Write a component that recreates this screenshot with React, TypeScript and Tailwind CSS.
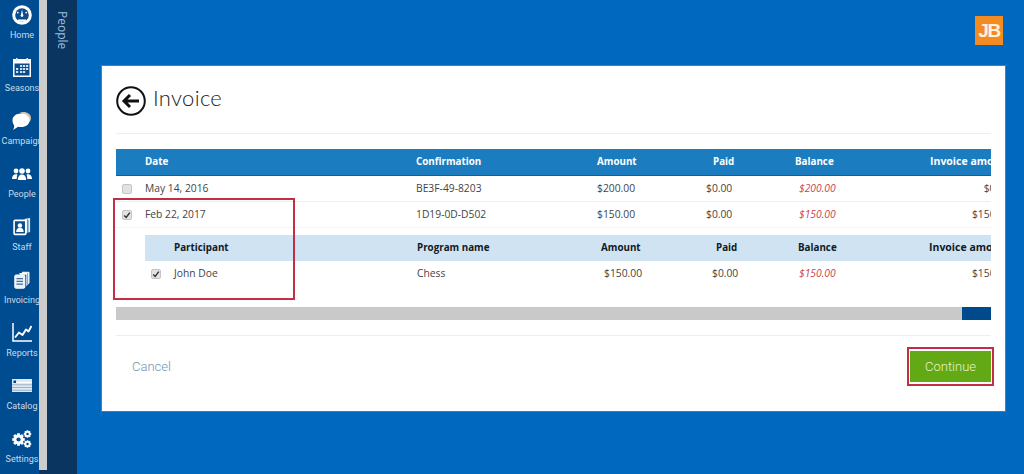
import type { ReactNode } from "react"

const font = "font-['Open_Sans','Noto_Sans',sans-serif]"

function HomeIcon() {
  return (
    <svg viewBox="0 0 20 20" className="w-[20px] h-[20px]">
      <circle cx="10" cy="10" r="9.800" fill="#fff" />
      <circle cx="10" cy="10" r="6.800" fill="#0b4d8c" />
      <path d="M9 9.500 10 4.500 11 9.500a1.400 1.400 0 1 1-2 0Z" fill="#fff" />
      <circle cx="5.800" cy="7.600" r="0.900" fill="#fff" />
      <circle cx="14.200" cy="7.600" r="0.900" fill="#fff" />
      <path d="M6 14.500h8v2.200H6z" fill="#fff" />
    </svg>
  )
}

function SeasonsIcon() {
  return (
    <svg viewBox="0 0 20 21" className="w-[20px] h-[21px]">
      <path d="M1 2h18v18H1z" fill="#fff" />
      <path d="M2.500 6.500h15v12h-15z" fill="#0b4d8c" />
      <path d="M4 1h1.600v3H4zM14.400 1H16v3h-1.600z" fill="#d8e6f2" />
      <path d="M8 8h2.200v2H8zM11 8h2.200v2H11zM14 8h2.200v2H14zM4 11h2.200v2H4zM8 11h2.200v2H8zM11 11h2.200v2H11zM14 11h2.200v2H14zM4 14h2.200v2H4zM8 14h2.200v2H8zM11 14h2.200v2H11z" fill="#cfdfee" />
    </svg>
  )
}

function CampaignIcon() {
  return (
    <svg viewBox="0 0 20 20" className="w-[20px] h-[20px]">
      <path d="M8 1.500c5.500-1.800 11 1 11 5.500 0 2.500-1.500 4.300-3 5-1-4-4-7-8-10.500Z" fill="#d5c7ad" />
      <path d="M9 2.500c5 0 8.500 2.800 8.500 6.800s-3.500 6.800-8.500 6.800c-1 0-2-.1-2.800-.4L1 19c.8-1.400 1.300-3 1.200-4.500C1 13.200.5 11.300.5 9.300.5 5.300 4 2.500 9 2.500Z" fill="#fff" />
    </svg>
  )
}

function PeopleIcon() {
  return (
    <svg viewBox="0 0 20 12" className="w-[20px] h-[12px]" fill="#fff">
      <circle cx="4" cy="3" r="2.400" />
      <circle cx="16" cy="3" r="2.400" />
      <circle cx="10" cy="3" r="2.800" />
      <path d="M0 11c0-3 1.500-4.800 4-4.800.6 0 1.100.1 1.500.3C5 7.700 4.700 9.200 4.700 11H0ZM20 11c0-3-1.500-4.800-4-4.800-.6 0-1.100.1-1.500.3.500 1.200.8 2.700.8 4.500H20ZM5.800 12c0-3.500 1.600-5.500 4.200-5.500s4.200 2 4.200 5.500H5.800Z" />
    </svg>
  )
}

function StaffIcon() {
  return (
    <svg viewBox="0 0 20 20" className="w-[18px] h-[19px]">
      <path d="M15.500 1.200 19 .5v15.500l-2 .8V3Z" fill="#dfe9f3" />
      <path d="M12.500 1.800 16 1v16l-1.500.5V3.500Z" fill="#f2f6fa" />
      <rect x="1.200" y="3.200" width="13" height="15.600" rx="1" fill="#0b4d8c" stroke="#fff" strokeWidth="1.800" />
      <circle cx="7.700" cy="8.800" r="2.500" fill="#fff" />
      <path d="M3.500 16c.2-3 1.800-4.500 4.200-4.500s4 1.500 4.200 4.500Z" fill="#fff" />
    </svg>
  )
}

function InvoicingIcon() {
  return (
    <svg viewBox="0 0 16 18" className="w-[16px] h-[18px]">
      <path d="M8 .7h6.500a1 1 0 0 1 1 1V12l-1.500 1.500V2.500H8Z" fill="#e8f0f7" />
      <path d="M5.500 2h7a1 1 0 0 1 1 1v11l-1.200 1.200V3.700H5.500Z" fill="#fff" />
      <rect x=".8" y="4" width="10" height="13.200" rx="1.200" fill="#e9f0f6" stroke="#fff" strokeWidth="1" />
      <path d="M2.500 7h6.500v1.300H2.500zM2.500 9.700h6.500V11H2.500zM2.500 12.400h6.500v1.300H2.500z" fill="#476f97" />
    </svg>
  )
}

function ReportsIcon() {
  return (
    <svg viewBox="0 0 20 19" className="w-[20px] h-[19px]" fill="none" stroke="#fff" strokeWidth="1.500">
      <path d="M1 0v18h19" />
      <path d="M3 14.500 7 9.500l3.500 2.500L14 6.500l2.500 2 3-5.500" strokeWidth="1.900" strokeLinejoin="round" />
    </svg>
  )
}

function CatalogIcon() {
  return (
    <svg viewBox="0 0 20 13" className="w-[20px] h-[13px]">
      <path d="M0 0h20v13H0z" fill="#dfe8f0" />
      <path d="M1.500 1.500h2.500V4H1.500z" fill="#0b3f73" />
      <path d="M5 3h14v1H5z" fill="#fff" />
      <path d="M0 5.300h20v1H0zM0 8h20v1H0zM0 10.700h20v1H0z" fill="#9cb4c9" />
    </svg>
  )
}

function Gear({ x, y, r }: { x: number; y: number; r: number }) {
  const teeth = [0, 45, 90, 135]
  return (
    <g>
      {teeth.map((a) => (
        <rect
          key={a}
          x={x - r * 0.28}
          y={y - r * 1.25}
          width={r * 0.56}
          height={r * 2.5}
          fill="#fff"
          transform={`rotate(${a} ${x} ${y})`}
        />
      ))}
      <circle cx={x} cy={y} r={r} fill="#fff" />
      <circle cx={x} cy={y} r={r * 0.42} fill="#0b4d8c" />
    </g>
  )
}

function SettingsIcon() {
  return (
    <svg viewBox="0 0 20 18" className="w-[20px] h-[18px]">
      <Gear x={6.500} y={9.500} r={5} />
      <Gear x={15.500} y={4} r={3} />
      <Gear x={15.500} y={14} r={3} />
    </svg>
  )
}

const navItems: { label: string; icon: ReactNode }[] = [
  { label: "Home", icon: <HomeIcon /> },
  { label: "Seasons", icon: <SeasonsIcon /> },
  { label: "Campaign", icon: <CampaignIcon /> },
  { label: "People", icon: <PeopleIcon /> },
  { label: "Staff", icon: <StaffIcon /> },
  { label: "Invoicing", icon: <InvoicingIcon /> },
  { label: "Reports", icon: <ReportsIcon /> },
  { label: "Catalog", icon: <CatalogIcon /> },
  { label: "Settings", icon: <SettingsIcon /> },
]

function Checkbox({ checked }: { checked?: boolean }) {
  return (
    <div className="w-[10px] h-[10px] rounded-[2px] bg-[#e2e2e2] border border-[#c4c4c4] flex items-center justify-center">
      {checked && (
        <svg viewBox="0 0 10 10" className="w-[8px] h-[8px]" fill="none" stroke="#333" strokeWidth="1.800">
          <path d="M1.500 5.500 4 8l4.500-6" />
        </svg>
      )}
    </div>
  )
}

const mainCols = "grid grid-cols-[29px_271px_181px_109px_89px_135px_80px] w-[894px]"
const subCols = "grid grid-cols-[29px_243px_184px_111px_86px_131px_81px] w-[865px]"

export default function App() {
  return (
    <div className={`relative flex w-[1024px] h-[474px] overflow-hidden bg-[#0068bf] ${font}`}>
      <nav className="w-[39px] shrink-0 overflow-hidden bg-[#004c90]">
        <div className="w-[44px] flex flex-col">
          {navItems.map((item) => (
            <div key={item.label} className="h-[53px] shrink-0 flex flex-col items-center pt-[4px]">
              <div className="h-[21px] flex items-center justify-center">{item.icon}</div>
              <span className="mt-[3px] font-['Roboto',sans-serif] text-[9px] leading-[14px] text-[#c9dcec] whitespace-nowrap">
                {item.label}
              </span>
            </div>
          ))}
        </div>
      </nav>
      <div className="w-[8px] shrink-0 bg-[#0a3560]">
        <div className="h-[470px] bg-[#cccccc]" />
      </div>
      <aside className="w-[30px] shrink-0 bg-[#0a3560] flex justify-center pt-[11px]">
        <span className="[writing-mode:vertical-rl] text-[12px] leading-[14px] text-[#9dbfdc]">People</span>
      </aside>

      <main className="flex-1 flex flex-col pl-[24px] pt-[16px]">
        <div className="w-[905px] flex justify-end pr-[3px]">
          <div className="w-[28px] h-[29px] bg-[#f28c22] flex items-center justify-center">
            <span className="font-['Liberation_Sans',sans-serif] font-bold text-[19px] leading-none tracking-[-1.500px] text-[#fdf3e4]">
              JB
            </span>
          </div>
        </div>

        <section className="mt-[20px] w-[905px] h-[347px] bg-white border border-[#5b7d99] border-b-[#66737e] px-[14px] flex flex-col">
          <header className="h-[68px] shrink-0 flex items-start gap-[7px] border-b border-[#eeeeee] pt-[20px]">
            <svg viewBox="0 0 30 30" className="w-[30px] h-[30px]" fill="none" stroke="#111" strokeWidth="2">
              <circle cx="15" cy="15" r="13.800" />
              <path d="M23 15H8.500M14 9l-6 6 6 6" strokeWidth="3" />
            </svg>
            <h1 className="-mt-[1px] font-['Lato',sans-serif] font-light text-[22px] leading-[26px] text-[#222] tracking-[0.3px]">
              Invoice
            </h1>
          </header>

          <div className="mt-[15px] w-[875px] overflow-hidden text-[10.300px] text-[#444]">
            <div className={`${mainCols} h-[27px] items-center bg-[#1b7dc0] border-b border-[#175d90] font-bold text-[9.800px] text-white`}>
              <span />
              <span>Date</span>
              <span>Confirmation</span>
              <span>Amount</span>
              <span className="pl-[7px]">Paid</span>
              <span>Balance</span>
              <span className="text-[10.500px] whitespace-nowrap">Invoice amount</span>
            </div>

            <div className={`${mainCols} h-[26px] items-center border-b border-[#eeeeee]`}>
              <div className="pl-[6px]"><Checkbox /></div>
              <span>May 14, 2016</span>
              <span>BE3F-49-8203</span>
              <span>$200.00</span>
              <span>$0.00</span>
              <span className="italic text-[#c8434f] pl-[4px]">$200.00</span>
              <span className="text-right">$0.00</span>
            </div>

            <div className={`${mainCols} h-[26px] items-center border-b border-[#f4f4f4] pt-[1px]`}>
              <div className="pl-[6px]"><Checkbox checked /></div>
              <span>Feb 22, 2017</span>
              <span>1D19-0D-D502</span>
              <span>$150.00</span>
              <span>$0.00</span>
              <span className="italic text-[#c8434f] pl-[4px]">$150.00</span>
              <span className="text-right">$150.00</span>
            </div>

            <div className="ml-[29px] mt-[7px] overflow-hidden">
              <div className={`${subCols} h-[26px] items-center bg-[#cfe3f2] font-bold text-[9.800px] text-[#111a24]`}>
                <span />
                <span>Participant</span>
                <span>Program name</span>
                <span>Amount</span>
                <span className="pl-[4px]">Paid</span>
                <span>Balance</span>
                <span className="text-[10.500px] whitespace-nowrap">Invoice amount</span>
              </div>
              <div className={`${subCols} h-[26px] items-center`}>
                <div className="pl-[6px]"><Checkbox checked /></div>
                <span>John Doe</span>
                <span>Chess</span>
                <span className="pl-[3px]">$150.00</span>
                <span>$0.00</span>
                <span className="italic text-[#c8434f] pl-[1px]">$150.00</span>
                <span className="text-right">$150.00</span>
              </div>
            </div>
          </div>

          <div className="mt-[20px] w-[875px] h-[13px] shrink-0 bg-[#c9c9c9] flex justify-end">
            <div className="w-[29px] bg-[#004a8c]" />
          </div>

          <footer className="mt-[15px] w-[875px] border-t border-[#eeeeee] pt-[15px] flex items-center justify-between">
            <a className="pl-[16px] font-['Roboto',sans-serif] font-light text-[13px] text-[#6f96b4]">Cancel</a>
            <button className="w-[81px] h-[31px] bg-[#62a915] font-['Roboto',sans-serif] font-light text-[13px] text-[#e6f3d6]">Continue</button>
          </footer>
        </section>
      </main>

      {/* red callouts drawn over the screenshot */}
      <div className="absolute left-[113px] top-[198px] w-[182px] h-[102px] border-2 border-[#c22f45]" />
      <div className="absolute left-[907px] top-[347px] w-[87px] h-[39px] border-2 border-[#c22f45]" />
    </div>
  )
}
